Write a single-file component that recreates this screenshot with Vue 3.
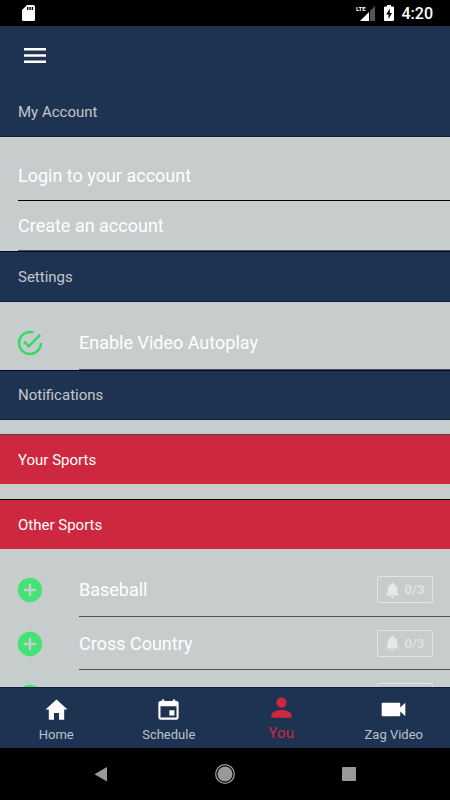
<template>
  <div class="app">
    <header class="status-bar">
      <svg class="sd-icon" viewBox="0 0 13 16">
        <path fill="#fff" d="M5 0h6.500A1.500 1.500 0 0 1 13 1.500v13a1.500 1.500 0 0 1-1.500 1.500h-10A1.500 1.500 0 0 1 0 14.500V5z" />
        <path fill="#000" d="M5 2h1.400v3H5zM7.400 2h1.400v3H7.400zM9.700 2h1.400v3H9.700z" />
      </svg>
      <div class="status-right">
        <svg class="signal-icon" viewBox="0 0 20 17">
          <path fill="#555" d="M14 6l5-5v15h-5z" />
          <path fill="#fff" d="M13 7v9H4z" />
          <text x="0" y="6">LTE</text>
        </svg>
        <svg class="battery-icon" viewBox="0 0 10 16">
          <path fill="#fff" d="M3 0h4v1.500h2a1 1 0 0 1 1 1V15a1 1 0 0 1-1 1H1a1 1 0 0 1-1-1V2.500a1 1 0 0 1 1-1h2z" />
          <path fill="#000" d="M5.800 3.500 2.200 9.500h2.300V14l3.500-6H5.800z" />
        </svg>
        <span class="clock">4:20</span>
      </div>
    </header>

    <div class="toolbar">
      <button class="menu-btn" type="button" aria-label="Menu">
        <svg viewBox="0 0 22 15">
          <path fill="#fff" d="M0 0h22v2.500H0zM0 6.200h22v2.500H0zM0 12.400h22v2.500H0z" />
        </svg>
      </button>
    </div>

    <main class="content">
      <h2 class="section-title account-title">My Account</h2>
      <div class="list">
        <a v-for="link in accountLinks" :key="link" class="link-row" href="#">{{ link }}</a>
      </div>

      <h2 class="section-title settings-title">Settings</h2>
      <div class="list">
        <div class="row">
          <span class="toggle">
            <input id="autoplay" type="checkbox" v-model="autoplay" />
            <svg viewBox="0 0 512 512">
              <path v-if="autoplay" d="M170.700 216.500L141.600 245.600l93.600 93.600 208-208-29.100-29.100L235.200 279.900z" />
              <path d="M422.400 256c0 91.500-74.900 166.400-166.400 166.400S89.600 347.500 89.600 256 164.500 89.600 256 89.600c15.600 0 31.200 2.100 45.800 6.200L334 62.600C310.200 53.300 283.600 48 256 48 141.600 48 48 141.600 48 256s93.600 208 208 208 208-93.600 208-208h-41.600z" />
            </svg>
          </span>
          <label class="row-body" for="autoplay">Enable Video Autoplay</label>
        </div>
      </div>

      <h2 class="section-title">Notifications</h2>
      <h3 class="sport-title">Your Sports</h3>
      <h3 class="sport-title other-title">Other Sports</h3>
      <div class="list">
        <div v-for="(sport, index) in sports" :key="index" class="row sport-row">
          <button class="add-btn" type="button" :aria-label="'Add ' + sport.name">
            <svg viewBox="0 0 512 512">
              <path d="M256 48C141.100 48 48 141.100 48 256s93.100 208 208 208 208-93.100 208-208S370.900 48 256 48zm107 229h-86v86h-42v-86h-86v-42h86v-86h42v86h86v42z" />
            </svg>
          </button>
          <div class="row-body">
            <span>{{ sport.name }}</span>
            <button class="alert-btn" type="button">
              <svg viewBox="0 0 16 20">
                <path d="M8 20a2 2 0 0 0 2-2H6a2 2 0 0 0 2 2zm6-6V9c0-3.100-1.600-5.600-4.500-6.300V2a1.500 1.500 0 0 0-3 0v.7C3.600 3.400 2 5.900 2 9v5l-2 2v1h16v-1z" />
              </svg>
              <span>{{ sport.alerts }}</span>
            </button>
          </div>
        </div>
      </div>
    </main>

    <nav class="tabs">
      <a v-for="tab in tabs" :key="tab.name" class="tab" :class="{ active: tab.name === activeTab }" href="#" @click.prevent="activeTab = tab.name">
        <svg viewBox="0 0 512 512"><path :d="tab.icon" /></svg>
        <span>{{ tab.name }}</span>
      </a>
    </nav>

    <footer class="system-nav">
      <button type="button" aria-label="Back">
        <svg viewBox="0 0 24 24"><path d="M18 5v14.500L5.500 12.200z" /></svg>
      </button>
      <button type="button" aria-label="Home screen">
        <svg viewBox="0 0 24 24">
          <circle cx="12" cy="12" r="9.300" fill="none" stroke="#999" stroke-width="1.300" />
          <circle cx="12" cy="12" r="7.500" />
        </svg>
      </button>
      <button type="button" aria-label="Recent apps">
        <svg viewBox="0 0 24 24"><rect x="5" y="5" width="14" height="14" rx="1" /></svg>
      </button>
    </footer>
  </div>
</template>

<script setup>
import { ref } from 'vue';

const autoplay = ref(true);
const activeTab = ref('You');

const accountLinks = ['Login to your account', 'Create an account'];

const sports = ref([
  { name: 'Baseball', alerts: '0/3' },
  { name: 'Cross Country', alerts: '0/3' },
  { name: '', alerts: '' },
]);

const tabs = [
  {
    name: 'Home',
    icon: 'M208 448V320h96v128h97.600V256H464L256 64 48 256h62.400v192z',
  },
  {
    name: 'Schedule',
    icon: 'M368 272h-96v96h96v-96zM336 64v32H176V64h-48v32h-24c-22 0-40 18-40 40v272c0 22 18 40 40 40h304c22 0 40-18 40-40V136c0-22-18-40-40-40h-24V64h-48zm72 344H104V196h304v212z',
  },
  {
    name: 'You',
    icon: 'M256 256c52.800 0 96-43.200 96-96s-43.200-96-96-96-96 43.200-96 96 43.200 96 96 96zm0 48c-63.600 0-192 32.400-192 96v48h384v-48c0-63.600-128.400-96-192-96z',
  },
  {
    name: 'Zag Video',
    icon: 'M384 219.700v-74.600c0-9.400-7.700-17.100-17.100-17.100H49.100C39.700 128 32 135.700 32 145.100v221.800c0 9.400 7.700 17.100 17.100 17.100h317.800c9.400 0 17.100-7.700 17.100-17.100v-74.600l96 91.700V128l-96 91.700z',
  },
];
</script>

<style>
body {
  margin: 0;
  background-color: #000;
}
</style>

<style scoped>
.app {
  display: flex;
  flex-direction: column;
  height: 100vh;
  overflow: hidden;
  background-color: #c7cccc;
  font-family: Roboto, sans-serif;
}

.app * {
  box-sizing: border-box;
}

button {
  padding: 0;
  border: none;
  background: none;
  font-family: inherit;
  cursor: pointer;
}

a {
  text-decoration: none;
}

svg {
  display: block;
}

.status-bar {
  display: flex;
  flex: none;
  align-items: center;
  justify-content: space-between;
  height: 26px;
  padding: 0 17px 0 22px;
  background-color: #000;
}

.sd-icon {
  width: 13px;
  height: 16px;
}

.status-right {
  display: flex;
  align-items: center;
}

.signal-icon {
  width: 20px;
  height: 17px;
}

.signal-icon text {
  fill: #fff;
  font-size: 6px;
  font-weight: 700;
}

.battery-icon {
  width: 10px;
  height: 16px;
  margin: 0 8px;
}

.clock {
  padding-top: 2px;
  color: #fff;
  font-size: 16px;
  font-weight: 500;
  line-height: 24px;
}

.toolbar {
  display: flex;
  flex: none;
  align-items: center;
  height: 62px;
  padding: 0 24px 2px;
  border-bottom: 1px solid #1a2e49;
  background-color: #1e3352;
}

.menu-btn svg {
  width: 22px;
  height: 15px;
}

.content {
  flex: 1;
  min-height: 0;
  overflow: hidden;
}

.section-title,
.sport-title {
  display: flex;
  align-items: center;
  height: 50px;
  margin: 0;
  padding: 0 18px;
  font-size: 15px;
  font-weight: 400;
}

.section-title {
  border-top: 1px solid #020a20;
  border-bottom: 1px solid #10203c;
  background-color: #1e3352;
  color: #c3c7cb;
}

.account-title {
  height: 49px;
  border-top: none;
}

.settings-title {
  height: 51px;
}

.sport-title {
  margin-top: 14px;
  border-top: 1px solid #4a4248;
  background-color: #cd2840;
  color: #fff;
}

.other-title {
  margin-top: 15px;
  border-top-color: #000;
}

.list {
  padding-top: 14px;
}

.link-row {
  display: flex;
  align-items: center;
  height: 50px;
  margin-left: 18px;
  border-bottom: 1px solid #000;
  color: #fff;
  font-size: 18px;
}

.link-row:last-child {
  border-bottom-color: #555;
}

.row {
  display: flex;
  align-items: center;
  height: 54px;
  padding-left: 15px;
}

.sport-row + .sport-row {
  height: 53px;
}

.toggle,
.add-btn {
  position: relative;
  flex: none;
  width: 30px;
  height: 30px;
  margin-right: 34px;
}

.toggle input {
  position: absolute;
  inset: 0;
  width: 100%;
  height: 100%;
  margin: 0;
  opacity: 0;
  cursor: pointer;
}

.toggle svg {
  fill: #32db64;
}

.add-btn svg {
  fill: #43e374;
}

.row-body {
  display: flex;
  flex: 1;
  align-items: center;
  justify-content: space-between;
  height: 100%;
  padding-right: 17px;
  border-bottom: 1px solid #505254;
  color: #fff;
  font-size: 18px;
}

.alert-btn {
  display: flex;
  align-items: center;
  justify-content: center;
  gap: 6px;
  width: 56px;
  height: 27px;
  border: 1px solid #e2e4e6;
  border-radius: 2px;
  color: #e4e6e8;
  font-size: 13px;
  font-weight: 500;
}

.alert-btn svg {
  width: 13px;
  height: 16px;
  fill: #e6e8ea;
}

.tabs {
  display: flex;
  flex: none;
  height: 61px;
  border-top: 1px solid #0c1f40;
  background-color: #1e3352;
}

.tab {
  display: flex;
  flex: 1;
  flex-direction: column;
  align-items: center;
  padding-top: 8px;
  color: #b9c1ce;
  font-size: 13px;
  line-height: 24px;
}

.tab svg {
  width: 27px;
  height: 27px;
  fill: #fff;
}

.tab.active {
  padding-top: 6px;
  color: #cd2840;
  font-size: 15px;
}

.tab.active svg {
  fill: #cd2840;
}

.system-nav {
  display: flex;
  flex: none;
  align-items: center;
  justify-content: space-between;
  height: 52px;
  padding: 0 22%;
  background-color: #000;
}

.system-nav button {
  margin: 0 -10px;
}

.system-nav svg {
  width: 24px;
  height: 24px;
  fill: #999;
}
</style>
